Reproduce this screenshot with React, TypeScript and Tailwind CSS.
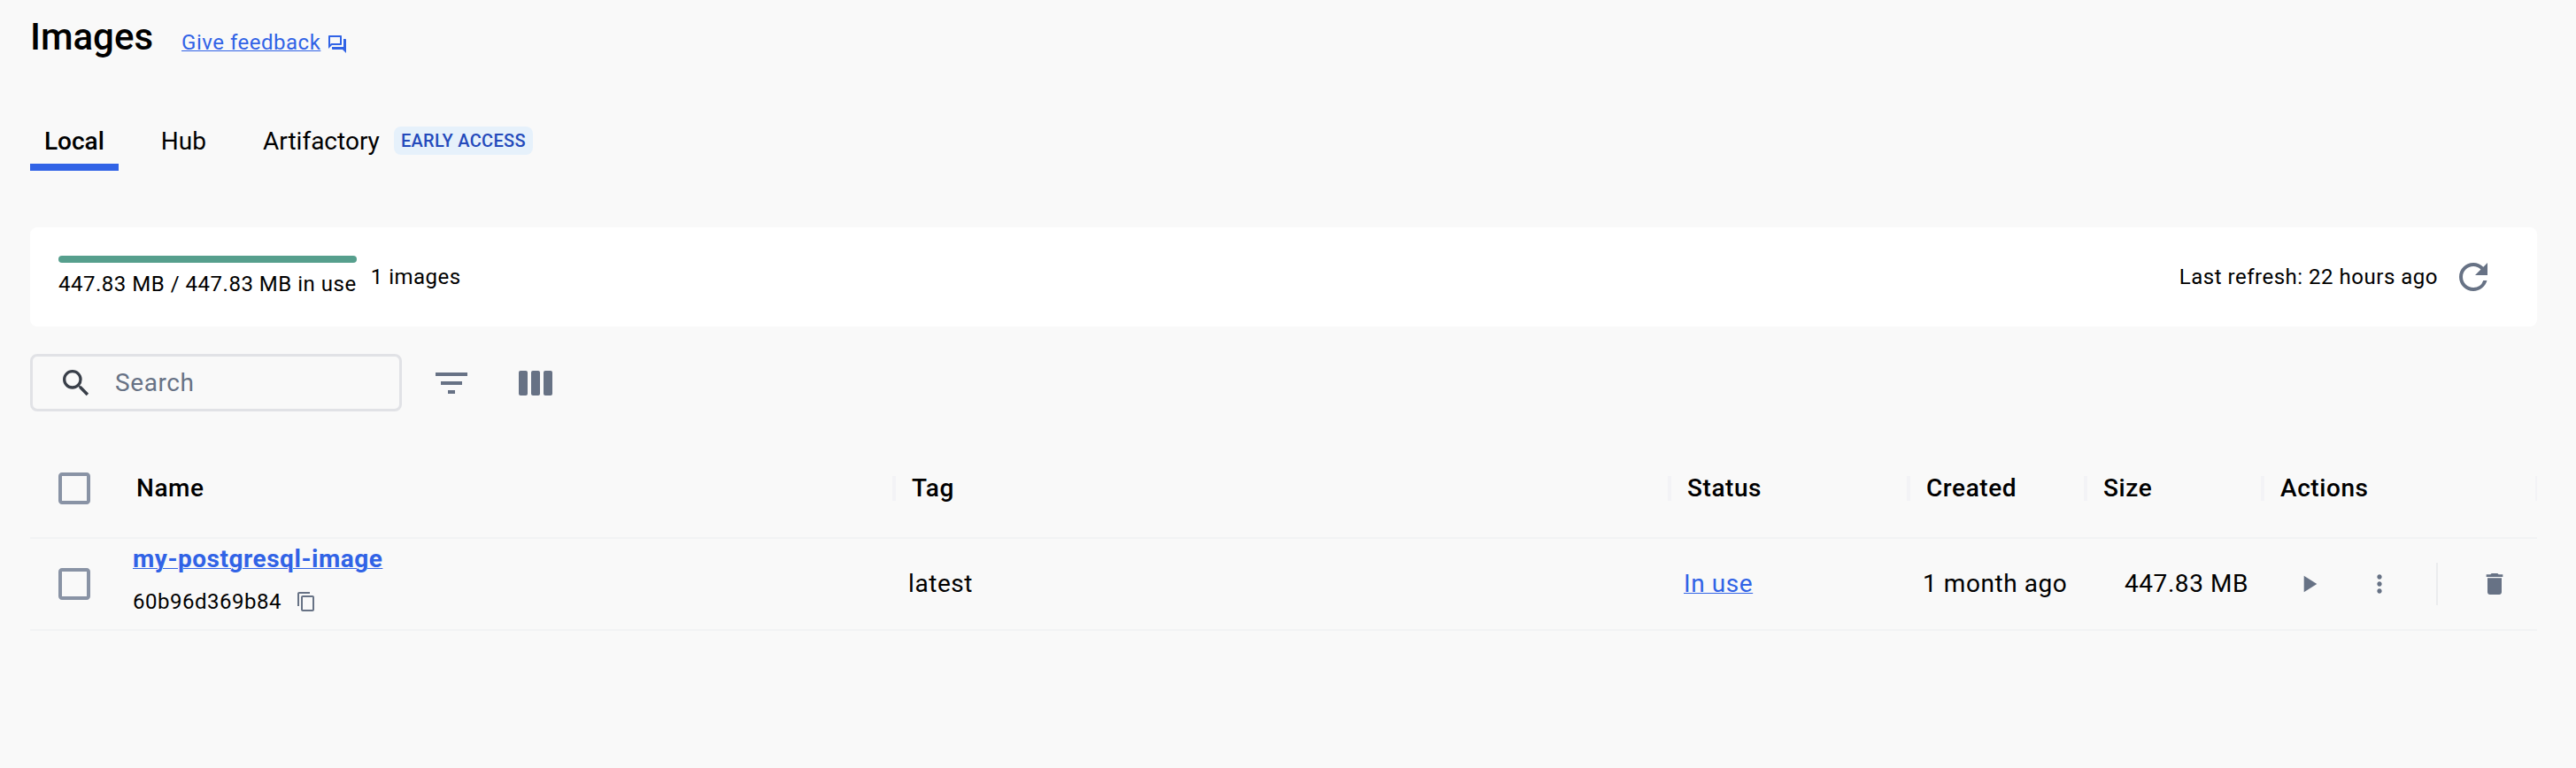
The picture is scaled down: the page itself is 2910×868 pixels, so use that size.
import type { ReactNode } from "react";
import {
  MdCheckBoxOutlineBlank,
  MdContentCopy,
  MdDelete,
  MdFilterList,
  MdMoreVert,
  MdOutlineQuestionAnswer,
  MdPlayArrow,
  MdRefresh,
  MdSearch,
} from "react-icons/md";

const columns = "grid grid-cols-[100px_876px_876px_270px_200px_200px_310px]";

function Link({ children, className = "" }: { children: ReactNode; className?: string }) {
  return (
    <a href="#" className={`text-[#3163e6] underline decoration-1 underline-offset-[1px] ${className}`}>
      {children}
    </a>
  );
}

function ColumnsIcon() {
  return (
    <svg width="38" height="28" viewBox="0 0 38 28" fill="#677285">
      <rect x="0" y="0" width="10" height="28" rx="2" />
      <rect x="14" y="0" width="10" height="28" rx="2" />
      <rect x="28" y="0" width="10" height="28" rx="2" />
    </svg>
  );
}

function HeaderCell({ label, last = false }: { label: string; last?: boolean }) {
  return (
    <div className="relative flex items-center pl-5">
      {label}
      <span
        className={`absolute top-1/2 h-7 -translate-y-1/2 bg-[#f3f3f6] ${last ? "right-0 w-0.5" : "-right-0.5 w-1"}`}
      />
    </div>
  );
}

export default function App() {
  return (
    <div className="h-[868px] w-[2910px] overflow-hidden bg-[#f9f9f9] pt-[17px] pr-11 pl-[34px] font-[Roboto,sans-serif] text-black">
      <header className="flex h-[50px] items-baseline">
        <h1 className="text-[42px] leading-[50px] font-medium">Images</h1>
        <div className="ml-8 flex items-center gap-[7px] text-2xl tracking-[0.51px]">
          <Link>Give feedback</Link>
          <MdOutlineQuestionAnswer size={24} className="mt-1 text-[#3163e6]" />
        </div>
      </header>

      <nav className="mt-[59px] flex h-[67px] gap-8 text-[28px]">
        <div className="flex items-center border-b-8 border-[#3163e6] px-4 pt-2 font-medium">Local</div>
        <div className="flex items-center border-b-8 border-transparent px-4 pt-2">Hub</div>
        <div className="flex items-center gap-4 border-b-8 border-transparent px-4 pt-2">
          Artifactory
          <span className="mb-px flex h-8 items-center rounded-lg bg-[#e6f1fb] px-2 text-xl font-medium tracking-[0.3px] text-[#244abb]">
            EARLY ACCESS
          </span>
        </div>
      </nav>

      <section className="mt-16 flex h-28 items-center rounded-lg bg-white pr-12 pl-8 text-2xl tracking-[0.51px]">
        <div>
          <div className="h-2 rounded bg-[#569f8d]" />
          <div className="mt-2">447.83 MB / 447.83 MB in use</div>
        </div>
        <div className="ml-4">1 images</div>
        <div className="ml-auto">Last refresh: 22 hours ago</div>
        <MdRefresh size={48} className="ml-4 text-[#677285]" />
      </section>

      <div className="mt-[31px] flex h-[65px] items-center">
        <div className="flex h-full w-[420px] items-center rounded-lg border-[3px] border-[#e1e2e6] pl-[29px] text-[28px] tracking-[0.6px] text-[#677285]">
          <MdSearch size={40} className="text-[#393f49]" />
          <span className="ml-6">Search</span>
        </div>
        <MdFilterList size={48} className="ml-8 text-[#677285]" />
        <div className="ml-[52px]">
          <ColumnsIcon />
        </div>
      </div>

      <div className="mt-8 text-[28px] tracking-[0.57px]">
        <div className={`${columns} h-28 border-b-2 border-[#f2f3f4] font-medium`}>
          <div className="flex items-center justify-center">
            <MdCheckBoxOutlineBlank size={48} className="text-[#8993a5]" />
          </div>
          <HeaderCell label="Name" />
          <HeaderCell label="Tag" />
          <HeaderCell label="Status" />
          <HeaderCell label="Created" />
          <HeaderCell label="Size" />
          <HeaderCell label="Actions" last />
        </div>

        <div className={`${columns} h-[104px] border-b-2 border-[#f2f3f4]`}>
          <div className="flex items-center justify-center">
            <MdCheckBoxOutlineBlank size={48} className="text-[#8993a5]" />
          </div>
          <div className="flex flex-col items-start pt-0.5 pl-4">
            <Link className="leading-[42px] font-bold tracking-[0.53px]">my-postgresql-image</Link>
            <div className="mt-2 flex items-center text-2xl leading-[38px] tracking-[0.51px]">
              60b96d369b84
              <MdContentCopy size={24} className="ml-4 text-[#677285]" />
            </div>
          </div>
          <div className="flex items-center pl-4">latest</div>
          <div className="flex items-center pl-4">
            <Link>In use</Link>
          </div>
          <div className="flex items-center pl-4">1 month ago</div>
          <div className="flex items-center justify-end pr-4">447.83 MB</div>
          <div className="flex items-center pl-9 text-[#677285]">
            <MdPlayArrow size={32} />
            <MdMoreVert size={32} className="ml-12" />
            <div className="ml-12 h-12 w-0.5 bg-[#ebecee]" />
            <MdDelete size={32} className="ml-12" />
          </div>
        </div>
      </div>
    </div>
  );
}
